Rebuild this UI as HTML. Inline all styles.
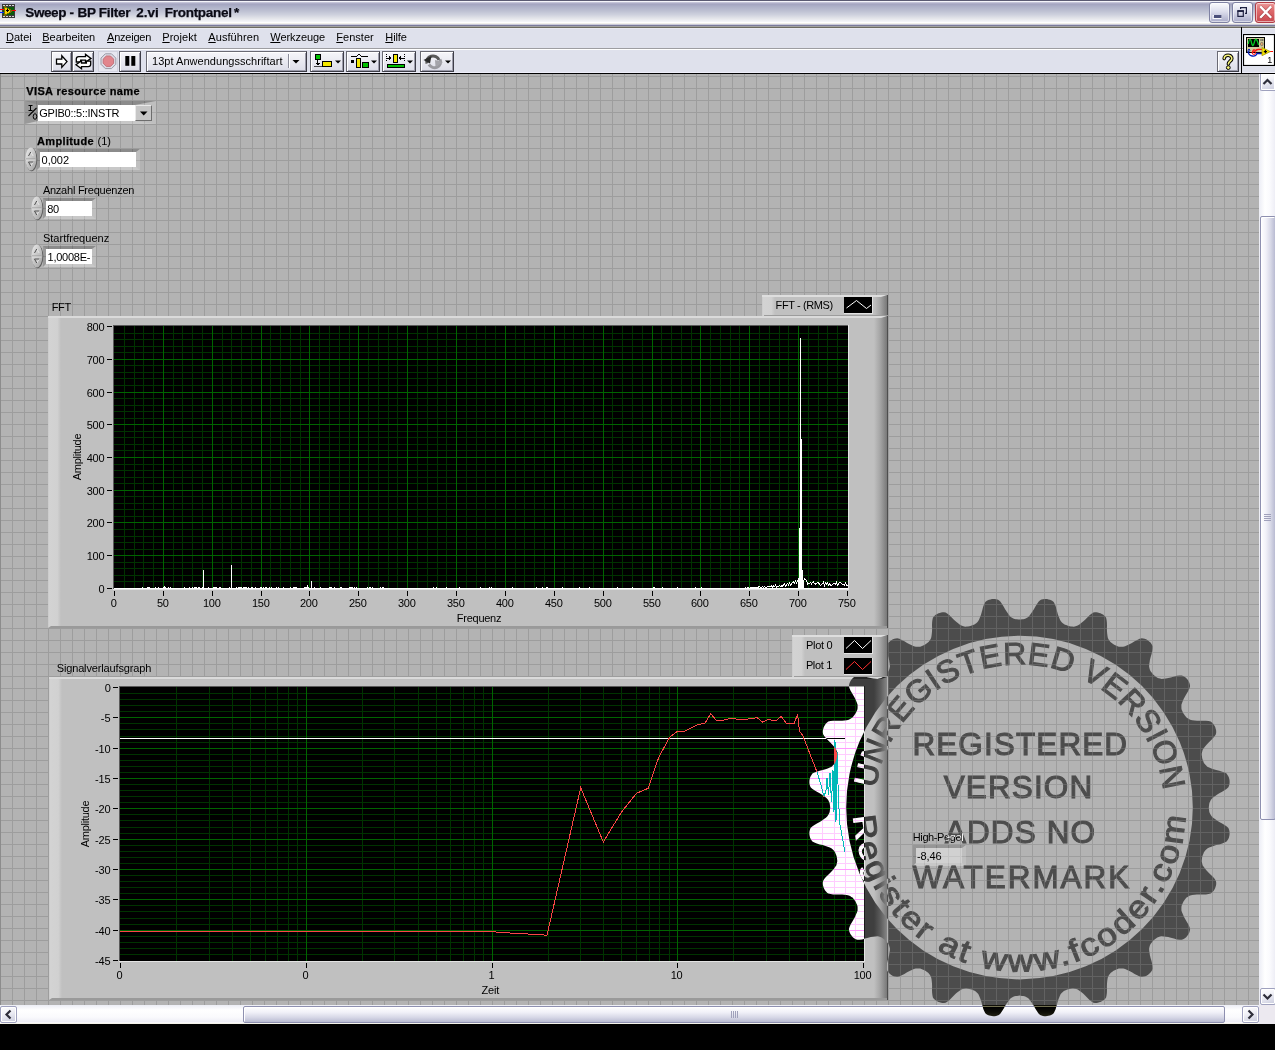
<!DOCTYPE html>
<html><head><meta charset="utf-8"><title>Sweep - BP Filter 2.vi Frontpanel *</title>
<style>
html,body{margin:0;padding:0;}
body{width:1275px;height:1050px;overflow:hidden;position:relative;background:#000;font-family:"Liberation Sans",sans-serif;}
.a{position:absolute;}
.t{position:absolute;white-space:nowrap;font-family:"Liberation Sans",sans-serif;}
#titlebar{left:0;top:0;width:1275px;height:28px;background:linear-gradient(to bottom,#5a5a72 0.5px,#f4f4fa 1.5px,#c4c4d8 2.5px,#aeaec8 3.5px,#a5a6c1 4.5px,#adb0c8 6.5px,#bcbfd1 10.5px,#cdd0dd 14.5px,#e4e5ea 18.5px,#f4f5f8 21.5px,#ffffff 22.5px,#f1efe9 23.5px,#c9c9d9 24.5px,#7b7b9b 25.5px,#a1a1a1 26.5px,#6e6c60 27.5px);}
#menubar{left:0;top:28px;width:1275px;height:21px;background:#dfe1ec;border-bottom:1px solid #9d9da1;border-top:1px solid #e8e9f3;box-sizing:border-box;}
#toolbar{left:0;top:49px;width:1275px;height:24px;background:#dfe1ec;border-top:1px solid #fff;border-bottom:1px solid #eeeefa;box-sizing:border-box;}
#tbline{left:0;top:73px;width:1275px;height:1px;background:#000;}
#panel{left:0;top:74px;width:1259px;height:931px;background-color:#b3b3b3;
 background-image:linear-gradient(to right,#9d9d9d 1px,transparent 1px),linear-gradient(to bottom,#9d9d9d 1px,transparent 1px);
 background-size:12px 12px,12px 12px;background-position:0px 0px,0px 2px;}
.tb{position:absolute;top:51px;height:21px;box-sizing:border-box;border:1px solid;border-color:#6a6a74 #3e3e48 #3e3e48 #6a6a74;background:linear-gradient(to bottom,#f6f6fa,#dcdde8);box-shadow:inset 1px 1px 0 #fff,inset -1px -1px 0 #9c9cab;}
.sbh{left:0;top:1005px;width:1259px;height:19px;background:linear-gradient(to bottom,#ecedf5 0,#ffffff 5px,#fafafd 12px,#eeeef6 17px,#ffffff 18px,#ece9d8 19px);}
.sbv{left:1259px;top:74px;width:16px;height:931px;background:linear-gradient(to right,#ecedf5 0,#ffffff 6px,#fafafd 11px,#eeeef6 16px);}
.sbtn{position:absolute;box-sizing:border-box;border:1px solid #9fa1be;border-radius:2px;background:linear-gradient(160deg,#ffffff 0%,#f4f4f9 35%,#c9cbdd 100%);box-shadow:inset 0 0 0 1px #fff;}
.field{position:absolute;background:#fff;}
</style></head><body>

<div id="titlebar" class="a"></div>
<svg class="a" style="left:0;top:3px" width="20" height="16" viewBox="0 0 20 16" shape-rendering="crispEdges">
<rect x="2" y="1" width="13" height="14" fill="#3b3b3b"/>
<rect x="3" y="4" width="11" height="8" fill="#0a5a0a"/>
<g fill="#d8d8d8"><rect x="3" y="2" width="2" height="1"/><rect x="6" y="2" width="2" height="1"/><rect x="9" y="2" width="2" height="1"/><rect x="12" y="2" width="2" height="1"/>
<rect x="3" y="13" width="2" height="1"/><rect x="6" y="13" width="2" height="1"/><rect x="9" y="13" width="2" height="1"/><rect x="12" y="13" width="2" height="1"/></g>
<rect x="0" y="6" width="5" height="1" fill="#ff0000"/><rect x="0" y="9" width="5" height="1" fill="#0030ff"/><rect x="11" y="7" width="5" height="1" fill="#ff0000"/>
<polygon points="4,3 4,13 12,8" fill="#f2d200" stroke="#7a6a00" stroke-width="1"/>
<rect x="6" y="7" width="3" height="1" fill="#000"/><rect x="7" y="6" width="1" height="3" fill="#000"/>
</svg>
<div class="t" style="left:25.30px;top:3.22px;font-size:13.5px;line-height:20px;color:#0a0a14;font-weight:bold;-webkit-text-stroke:0.25px #0a0a14;letter-spacing:-0.400px;">Sweep</div>
<div class="t" style="left:69.50px;top:3.22px;font-size:13.5px;line-height:20px;color:#0a0a14;font-weight:bold;-webkit-text-stroke:0.25px #0a0a14;">-</div>
<div class="t" style="left:77.60px;top:3.22px;font-size:13.5px;line-height:20px;color:#0a0a14;font-weight:bold;-webkit-text-stroke:0.25px #0a0a14;letter-spacing:-0.400px;">BP</div>
<div class="t" style="left:98.70px;top:3.22px;font-size:13.5px;line-height:20px;color:#0a0a14;font-weight:bold;-webkit-text-stroke:0.25px #0a0a14;letter-spacing:-0.218px;">Filter</div>
<div class="t" style="left:136.30px;top:3.22px;font-size:13.5px;line-height:20px;color:#0a0a14;font-weight:bold;-webkit-text-stroke:0.25px #0a0a14;letter-spacing:-0.054px;">2.vi</div>
<div class="t" style="left:164.80px;top:3.22px;font-size:13.5px;line-height:20px;color:#0a0a14;font-weight:bold;-webkit-text-stroke:0.25px #0a0a14;letter-spacing:-0.285px;">Frontpanel</div>
<div class="t" style="left:233.90px;top:3.22px;font-size:13.5px;line-height:20px;color:#0a0a14;font-weight:bold;-webkit-text-stroke:0.25px #0a0a14;">*</div>
<div class="a" style="left:1209px;top:2px;width:21px;height:21px;box-sizing:border-box;border:1px solid #7f82a3;border-radius:3px;background:linear-gradient(to bottom,#fbfbfd 0,#dddeed 45%,#a9abc9 100%);box-shadow:inset 0 0 0 1px rgba(255,255,255,.55);"></div>
<div class="a" style="left:1232px;top:2px;width:21px;height:21px;box-sizing:border-box;border:1px solid #7f82a3;border-radius:3px;background:linear-gradient(to bottom,#fbfbfd 0,#dddeed 45%,#a9abc9 100%);box-shadow:inset 0 0 0 1px rgba(255,255,255,.55);"></div>
<div class="a" style="left:1255px;top:2px;width:21px;height:21px;box-sizing:border-box;border:1px solid #b03a44;border-radius:3px;background:linear-gradient(to bottom,#ec9a9a 0,#de6a6c 40%,#c8484e 100%);box-shadow:inset 0 0 0 1px rgba(255,255,255,.55);"></div>
<svg class="a" style="left:1209px;top:2px" width="66" height="21" viewBox="0 0 66 21">
<rect x="5" y="13" width="8" height="3" fill="#4b4f7a" stroke="#fff" stroke-width="0" />
<rect x="4.5" y="12.5" width="8" height="3" fill="none" stroke="#fff" stroke-width="1" opacity=".9" transform="translate(-0.5,1)"/>
<rect x="5" y="13" width="7" height="3" fill="#4b4f7a"/>
<g fill="none" stroke="#1e2040" stroke-width="1.2"><path d="M31.6 7 V5.6 H37.4 V11.4 H36"/><rect x="28.9" y="9.2" width="5.4" height="5.2"/><path d="M28.3 9 H34.9" stroke-width="1.8"/></g>
<g stroke="#7a2a30" stroke-width="3.4" stroke-linecap="butt" opacity=".55"><path d="M51.2 4.4 L62.2 15.8 M62.2 4.4 L51.2 15.8"/></g><g stroke="#fff" stroke-width="2.3" stroke-linecap="butt"><path d="M51.2 4.4 L62.2 15.8 M62.2 4.4 L51.2 15.8"/></g>
</svg>
<div id="menubar" class="a"></div>
<div class="t" style="left:5.90px;top:26.59px;font-size:11px;line-height:20px;letter-spacing:0.044px;color:#000"><span style="text-decoration:underline;text-underline-offset:1px">D</span>atei</div>
<div class="t" style="left:42.30px;top:26.59px;font-size:11px;line-height:20px;letter-spacing:-0.041px;color:#000"><span style="text-decoration:underline;text-underline-offset:1px">B</span>earbeiten</div>
<div class="t" style="left:107.10px;top:26.59px;font-size:11px;line-height:20px;letter-spacing:-0.234px;color:#000"><span style="text-decoration:underline;text-underline-offset:1px">A</span>nzeigen</div>
<div class="t" style="left:162.30px;top:26.59px;font-size:11px;line-height:20px;letter-spacing:0.038px;color:#000"><span style="text-decoration:underline;text-underline-offset:1px">P</span>rojekt</div>
<div class="t" style="left:208.30px;top:26.59px;font-size:11px;line-height:20px;letter-spacing:0.073px;color:#000"><span style="text-decoration:underline;text-underline-offset:1px">A</span>usführen</div>
<div class="t" style="left:270.30px;top:26.59px;font-size:11px;line-height:20px;letter-spacing:-0.071px;color:#000"><span style="text-decoration:underline;text-underline-offset:1px">W</span>erkzeuge</div>
<div class="t" style="left:336.30px;top:26.59px;font-size:11px;line-height:20px;letter-spacing:0.029px;color:#000"><span style="text-decoration:underline;text-underline-offset:1px">F</span>enster</div>
<div class="t" style="left:385.30px;top:26.59px;font-size:11px;line-height:20px;letter-spacing:-0.102px;color:#000"><span style="text-decoration:underline;text-underline-offset:1px">H</span>ilfe</div>
<div id="toolbar" class="a"></div><div id="tbline" class="a"></div>
<div class="tb" style="left:51px;width:21px;"></div>
<div class="tb" style="left:72px;width:22px;"></div>
<div class="a" style="left:98px;top:51px;width:20px;height:21px;box-sizing:border-box;border:1px solid #d0d1dd;background:#e6e7f0;"></div>
<div class="tb" style="left:119px;width:22px;"></div>
<div class="tb" style="left:146px;width:161px;"></div>
<div class="tb" style="left:310px;width:34px;"></div>
<div class="tb" style="left:346px;width:34px;"></div>
<div class="tb" style="left:382px;width:34px;"></div>
<div class="tb" style="left:420px;width:34px;"></div>
<svg class="a" style="left:51px;top:51px" width="410" height="21" viewBox="0 0 410 21">
<!-- run arrow -->
<path d="M5.5 8.2 H10.8 V4.8 L16 10.6 L10.8 16.4 V13 H5.5 Z" fill="#fff" stroke="#000" stroke-width="1.3" stroke-linejoin="miter"/>
<!-- run continuously -->
<g fill="#fff" stroke="#000" stroke-width="1.3" stroke-linejoin="miter">
<path d="M25.3 11 V8 Q25.3 5.6 27.8 5.6 H34.5 V3.4 L40 7.4 L34.5 11.4 V9.2 H29.6 V11 Z"/>
<path d="M39.7 10.2 V13.2 Q39.7 15.6 37.2 15.6 H30.5 V17.8 L25 13.8 L30.5 9.8 V12 H35.4 V10.2 Z"/>
</g>
<!-- abort -->
<polygon points="64.8,13.3 60.5,17.6 54.3,17.6 50.0,13.3 50.0,7.1 54.3,2.8 60.5,2.8 64.8,7.1" fill="#dcdce5" stroke="#9a9aa6" stroke-width="1"/>
<polygon points="62.6,12.3 59.5,15.4 55.3,15.4 52.2,12.3 52.2,8.1 55.3,5.0 59.5,5.0 62.6,8.1" fill="#e2858c" stroke="#c4727a" stroke-width="1"/>
<!-- pause -->
<rect x="74.3" y="5" width="4" height="9.8" fill="#000"/><rect x="80.3" y="5" width="4" height="9.8" fill="#000"/>
<!-- font dropdown arrow + sep -->
<rect x="237" y="3" width="1" height="14" fill="#8b8c99"/><rect x="238" y="3" width="1" height="14" fill="#fff"/>
<polygon points="241.5,9 248.5,9 245,12.5" fill="#000"/>
<!-- align -->
<g shape-rendering="crispEdges">
<rect x="264" y="3" width="5" height="5" fill="#00c000" stroke="#000" stroke-width="1"/>
<rect x="266" y="9" width="1" height="5" fill="#000"/><polygon points="263.5,11.5 269.5,11.5 266.5,14.5" fill="#000"/>
<rect x="263" y="15" width="13" height="1" fill="#000" opacity=".7"/>
<rect x="271" y="10" width="9" height="5" fill="#f4e800" stroke="#000" stroke-width="1"/>
</g><polygon points="284,9.5 290,9.5 287,12.5" fill="#000"/>
<!-- distribute -->
<g shape-rendering="crispEdges">
<path d="M300 6 V5 H306 L308 3 L310 5 H316 V6" fill="none" stroke="#000" stroke-width="1"/>
<rect x="300" y="9" width="3" height="3" fill="#000"/>
<rect x="305" y="7" width="4" height="9" fill="#f4e800" stroke="#000" stroke-width="1"/>
<rect x="311" y="11" width="6" height="5" fill="#00c000" stroke="#000" stroke-width="1"/>
</g><polygon points="320,9.5 326,9.5 323,12.5" fill="#000"/>
<!-- resize -->
<g shape-rendering="crispEdges">
<rect x="342" y="3" width="4" height="8" fill="#f4e800" stroke="#000" stroke-width="1"/>
<path d="M335 7 H340 M348 7 H353" stroke="#000" stroke-width="1"/><polygon points="338,4.5 341,7 338,9.5" fill="#000"/><polygon points="350,4.5 347,7 350,9.5" fill="#000"/>
<path d="M335 3 V11 M353 3 V11" stroke="#000" stroke-width="1" stroke-dasharray="1 1"/>
<rect x="336" y="13" width="17" height="3" fill="#00c000" stroke="#000" stroke-width="1"/>
</g><polygon points="356,9.5 362,9.5 359,12.5" fill="#000"/>
<!-- reorder -->
<g fill="none" stroke-linecap="butt">
<path d="M376 12.5 A6 5.5 0 1 1 388 9" stroke="#5a5a5a" stroke-width="3"/>
<path d="M389 8.5 A6 5.5 0 0 1 378 13.5" stroke="#9a9aa0" stroke-width="3"/>
</g><polygon points="372.5,9 380.5,5 379,12.5" fill="#2a2a2a"/><polygon points="392,11 384.5,16 384,9" fill="#a4a4aa"/>
<polygon points="394,9.5 400,9.5 397,12.5" fill="#000"/>
</svg>
<div class="t" style="left:152.00px;top:50.69px;font-size:11px;line-height:20px;color:#000;letter-spacing:0.034px;">13pt Anwendungsschriftart</div>
<div class="tb" style="left:1217px;width:22px;"></div>
<svg class="a" style="left:1217px;top:51px" width="22" height="21" viewBox="0 0 22 21">
<path d="M7.2 7.6 C7.2 3.2 14.8 3.2 14.8 7.4 C14.8 10 11.4 10.2 11.4 13" fill="none" stroke="#000" stroke-width="3.6" stroke-linecap="round"/>
<path d="M7.2 7.6 C7.2 3.2 14.8 3.2 14.8 7.4 C14.8 10 11.4 10.2 11.4 13" fill="none" stroke="#f5f27a" stroke-width="1.6" stroke-linecap="round"/>
<circle cx="11.3" cy="16.6" r="1.9" fill="#f5f27a" stroke="#000" stroke-width="1"/>
</svg>
<div class="a" style="left:1241px;top:27px;width:1px;height:46px;background:#000"></div>
<svg class="a" style="left:1243px;top:34px" width="32" height="32" viewBox="0 0 32 32">
<rect x="0.5" y="0.5" width="31" height="31" fill="#fff" stroke="#000" stroke-width="1.2"/>
<rect x="3.5" y="3.5" width="18" height="15" fill="#cfcb9c" stroke="#000" stroke-width="1"/>
<rect x="5" y="5" width="11" height="8" fill="#000"/>
<path d="M5.3 10 C6.3 4 7.6 4 8.6 9 C9.4 12.5 10.4 12.5 11.4 8 C12.4 4 13.6 4 15.6 11" fill="none" stroke="#00c820" stroke-width="1.3"/>
<rect x="17.5" y="5" width="1" height="2" fill="#555"/><rect x="19.3" y="5" width="1" height="2" fill="#555"/>
<ellipse cx="18.8" cy="10" rx="1.3" ry="1.7" fill="#f0b070" stroke="#555" stroke-width=".6"/>
<path d="M5 17 C5.5 23 12.5 23.5 14 19.5 H19" fill="none" stroke="#0018b8" stroke-width="1.3"/>
<path d="M6 15.5 V18 M4.8 16.5 L6 15 L7.2 16.5" fill="none" stroke="#0018b8" stroke-width="1"/>
<path d="M10 19.5 C9 15.5 12 14.5 12.5 17.5 C13 14.5 15 15.5 19 15.5 M27 17.5 H30" fill="none" stroke="#ff1010" stroke-width="1.2"/>
<circle cx="10.8" cy="18.8" r="1.7" fill="none" stroke="#ff1010" stroke-width="1"/>
<polygon points="19,13.5 19,21.7 27.3,17.6" fill="#f4e400" stroke="#a89800" stroke-width=".8"/>
<path d="M20.8 17.6 H24 M22.4 16 V19.2" stroke="#000" stroke-width="1.1"/>
</svg>
<div class="t" style="left:1267.30px;top:49.88px;font-size:9px;line-height:20px;color:#000;">1</div>
<div id="panel" class="a"></div>
<div class="a" style="left:0;top:74px;width:1px;height:931px;background:#8c8c8c"></div>
<div class="t" style="left:26.20px;top:80.89px;font-size:11px;line-height:20px;color:#000;font-weight:bold;-webkit-text-stroke:0.25px #000;letter-spacing:0.400px;">VISA resource name</div>
<svg class="a" style="left:25px;top:101px" width="131" height="23" viewBox="0 0 131 23"><polygon points="0,0 131,0 110,4 13,4" fill="#000" fill-opacity="0.22"/><polygon points="0,0 13,4 13,20 0,23" fill="#000" fill-opacity="0.14"/><polygon points="0,23 13,20 110,20 131,23" fill="#fff" fill-opacity=".28"/><polygon points="131,0 131,23 110,20 110,4" fill="#fff" fill-opacity=".17"/><rect x="13" y="4" width="97" height="16" fill="#fff" fill-opacity="1.0"/></svg>
<svg class="a" style="left:26px;top:103px" width="13" height="19" viewBox="0 0 13 19">
<path d="M2.5 2.5 H6.5 M4.5 2.5 V7.5 M2.5 7.5 H6.5" stroke="#000" stroke-width="1" fill="none"/>
<path d="M2.5 13 L10.5 5" stroke="#000" stroke-width="1.1"/>
<ellipse cx="9" cy="13.5" rx="1.8" ry="2.8" fill="none" stroke="#000" stroke-width="1"/></svg>
<div class="t" style="left:39.30px;top:103.49px;font-size:11px;line-height:20px;color:#000;letter-spacing:-0.250px;">GPIB0::5::INSTR</div>
<div class="a" style="left:135px;top:105px;width:17px;height:16px;box-sizing:border-box;background:#c6c6c6;border:1px solid;border-color:#e9e9e9 #6d6d6d #6d6d6d #e9e9e9"></div>
<svg class="a" style="left:135px;top:105px" width="17" height="16"><polygon points="5,6.5 12.5,6.5 8.7,10.5" fill="#000"/></svg>
<div class="t" style="left:37.00px;top:130.69px;font-size:11px;line-height:20px;color:#000;font-weight:bold;-webkit-text-stroke:0.25px #000;letter-spacing:0.358px;">Amplitude</div>
<div class="t" style="left:97.50px;top:130.69px;font-size:11px;line-height:20px;color:#000;letter-spacing:0.019px;">(1)</div>
<svg class="a" style="left:37px;top:149px" width="103" height="21" viewBox="0 0 103 21"><polygon points="0,0 103,0 99,3 3,3" fill="#000" fill-opacity="0.22"/><polygon points="0,0 3,3 3,18 0,21" fill="#000" fill-opacity="0.14"/><polygon points="0,21 3,18 99,18 103,21" fill="#fff" fill-opacity=".28"/><polygon points="103,0 103,21 99,18 99,3" fill="#fff" fill-opacity=".17"/><rect x="3" y="3" width="96" height="15" fill="#fff" fill-opacity="1.0"/></svg>
<svg class="a" style="left:25px;top:147px" width="13" height="25" viewBox="0 0 13 25"><defs><linearGradient id="sg25147" x1="0" x2="1" y1="0" y2="1"><stop offset="0" stop-color="#ececec"/><stop offset=".4" stop-color="#cdcdcd"/><stop offset="1" stop-color="#a2a2a2"/></linearGradient></defs><ellipse cx="6.6" cy="12.6" rx="5.7" ry="11.7" fill="#5e5e5e"/><ellipse cx="5.9" cy="11.9" rx="5.5" ry="11.5" fill="url(#sg25147)"/><rect x="1" y="11.5" width="9.5" height="1" fill="#9a9a9a"/><rect x="1" y="12.5" width="9.5" height="1" fill="#dedede"/><path d="M3.5 9.0 L5.7 5.0 L8.2 9.0" fill="none" stroke="#e8e8e8" stroke-width="1"/><path d="M3.5 9.0 L5.7 5.0" fill="none" stroke="#4a4a4a" stroke-width="1"/><path d="M3.5 15.0 L5.7 19.0 L8.2 15.0 Z" fill="none" stroke="#e8e8e8" stroke-width="1"/><path d="M8.2 15.0 L3.5 15.0 L5.7 19.0" fill="none" stroke="#4a4a4a" stroke-width="1"/></svg>
<div class="t" style="left:41.60px;top:149.69px;font-size:11px;line-height:20px;color:#000;letter-spacing:-0.006px;">0,002</div>
<div class="t" style="left:42.90px;top:179.79px;font-size:11px;line-height:20px;color:#000;letter-spacing:-0.241px;">Anzahl Frequenzen</div>
<svg class="a" style="left:43px;top:198px" width="53" height="21" viewBox="0 0 53 21"><polygon points="0,0 53,0 49,3 3,3" fill="#000" fill-opacity="0.22"/><polygon points="0,0 3,3 3,18 0,21" fill="#000" fill-opacity="0.14"/><polygon points="0,21 3,18 49,18 53,21" fill="#fff" fill-opacity=".28"/><polygon points="53,0 53,21 49,18 49,3" fill="#fff" fill-opacity=".17"/><rect x="3" y="3" width="46" height="15" fill="#fff" fill-opacity="1.0"/></svg>
<svg class="a" style="left:31px;top:196px" width="13" height="25" viewBox="0 0 13 25"><defs><linearGradient id="sg31196" x1="0" x2="1" y1="0" y2="1"><stop offset="0" stop-color="#ececec"/><stop offset=".4" stop-color="#cdcdcd"/><stop offset="1" stop-color="#a2a2a2"/></linearGradient></defs><ellipse cx="6.6" cy="12.6" rx="5.7" ry="11.7" fill="#5e5e5e"/><ellipse cx="5.9" cy="11.9" rx="5.5" ry="11.5" fill="url(#sg31196)"/><rect x="1" y="11.5" width="9.5" height="1" fill="#9a9a9a"/><rect x="1" y="12.5" width="9.5" height="1" fill="#dedede"/><path d="M3.5 9.0 L5.7 5.0 L8.2 9.0" fill="none" stroke="#e8e8e8" stroke-width="1"/><path d="M3.5 9.0 L5.7 5.0" fill="none" stroke="#4a4a4a" stroke-width="1"/><path d="M3.5 15.0 L5.7 19.0 L8.2 15.0 Z" fill="none" stroke="#e8e8e8" stroke-width="1"/><path d="M8.2 15.0 L3.5 15.0 L5.7 19.0" fill="none" stroke="#4a4a4a" stroke-width="1"/></svg>
<div class="t" style="left:47.30px;top:198.69px;font-size:11px;line-height:20px;color:#000;letter-spacing:-0.368px;">80</div>
<div class="t" style="left:42.90px;top:227.99px;font-size:11px;line-height:20px;color:#000;letter-spacing:0.020px;">Startfrequenz</div>
<svg class="a" style="left:43px;top:246px" width="53" height="21" viewBox="0 0 53 21"><polygon points="0,0 53,0 49,3 3,3" fill="#000" fill-opacity="0.22"/><polygon points="0,0 3,3 3,18 0,21" fill="#000" fill-opacity="0.14"/><polygon points="0,21 3,18 49,18 53,21" fill="#fff" fill-opacity=".28"/><polygon points="53,0 53,21 49,18 49,3" fill="#fff" fill-opacity=".17"/><rect x="3" y="3" width="46" height="15" fill="#fff" fill-opacity="1.0"/></svg>
<svg class="a" style="left:31px;top:244px" width="13" height="25" viewBox="0 0 13 25"><defs><linearGradient id="sg31244" x1="0" x2="1" y1="0" y2="1"><stop offset="0" stop-color="#ececec"/><stop offset=".4" stop-color="#cdcdcd"/><stop offset="1" stop-color="#a2a2a2"/></linearGradient></defs><ellipse cx="6.6" cy="12.6" rx="5.7" ry="11.7" fill="#5e5e5e"/><ellipse cx="5.9" cy="11.9" rx="5.5" ry="11.5" fill="url(#sg31244)"/><rect x="1" y="11.5" width="9.5" height="1" fill="#9a9a9a"/><rect x="1" y="12.5" width="9.5" height="1" fill="#dedede"/><path d="M3.5 9.0 L5.7 5.0 L8.2 9.0" fill="none" stroke="#e8e8e8" stroke-width="1"/><path d="M3.5 9.0 L5.7 5.0" fill="none" stroke="#4a4a4a" stroke-width="1"/><path d="M3.5 15.0 L5.7 19.0 L8.2 15.0 Z" fill="none" stroke="#e8e8e8" stroke-width="1"/><path d="M8.2 15.0 L3.5 15.0 L5.7 19.0" fill="none" stroke="#4a4a4a" stroke-width="1"/></svg>
<div class="t" style="left:47.60px;top:246.79px;font-size:11px;line-height:20px;color:#000;letter-spacing:-0.268px;">1,0008E-</div>
<div class="t" style="left:912.80px;top:826.69px;font-size:11px;line-height:20px;color:#000;letter-spacing:-0.400px;">High-Pegel</div>
<svg class="a" style="left:913px;top:845px" width="53" height="21" viewBox="0 0 53 21"><polygon points="0,0 53,0 49,3 3,3" fill="#000" fill-opacity="0.16"/><polygon points="0,0 3,3 3,18 0,21" fill="#000" fill-opacity="0.16"/><polygon points="0,21 3,18 49,18 53,21" fill="#fff" fill-opacity=".28"/><polygon points="53,0 53,21 49,18 49,3" fill="#fff" fill-opacity=".17"/><rect x="3" y="3" width="46" height="15" fill="#fff" fill-opacity="0.4"/></svg>
<div class="t" style="left:917.00px;top:845.79px;font-size:11px;line-height:20px;color:#000;letter-spacing:-0.115px;">-8,46</div>
<div class="t" style="left:51.80px;top:296.89px;font-size:11px;line-height:20px;color:#000;letter-spacing:-0.400px;">FFT</div>
<svg class="a" style="left:762px;top:295px" width="126" height="21" viewBox="762 295 126 21"><defs><linearGradient id="lla" x1="0" x2="1" y1="0" y2="0"><stop offset="0" stop-color="#c9c9c9"/><stop offset=".1" stop-color="#d3d3d3"/><stop offset=".72" stop-color="#d1d1d1"/><stop offset="1" stop-color="#c0c0c0"/></linearGradient><linearGradient id="lra" x1="0" x2="1" y1="0" y2="0"><stop offset="0" stop-color="#c0c0c0"/><stop offset=".45" stop-color="#a4a4a4"/><stop offset="1" stop-color="#727272"/></linearGradient></defs><rect x="762" y="295" width="126" height="21" fill="#c0c0c0"/><rect x="762" y="295" width="13" height="21" fill="url(#lla)"/><rect x="874" y="295" width="14" height="21" fill="url(#lra)"/><polygon points="762,295 887,295 881,297 762,297" fill="#dedede"/><rect x="887" y="295" width="1" height="21" fill="#4e4e4e"/><rect x="764" y="315" width="124" height="1" fill="#9c9c9c"/><rect x="844" y="297" width="29" height="17" fill="#e2e2e2"/><rect x="844" y="297" width="28" height="16" fill="#000"/><polyline points="846.5,308 856.5,300.5 866.5,308.5 871,305" fill="none" stroke="#fff" stroke-width="1"/><g font-family="Liberation Sans, sans-serif" fill="#000"><text x="775.6" y="309" text-anchor="start" font-size="11" letter-spacing="-0.400">FFT - (RMS)</text></g></svg>
<svg class="a" style="left:48px;top:316px" width="840" height="312" viewBox="48 316 840 312"><defs><linearGradient id="lf" x1="0" x2="1" y1="0" y2="0"><stop offset="0" stop-color="#c9c9c9"/><stop offset=".1" stop-color="#d3d3d3"/><stop offset=".72" stop-color="#d1d1d1"/><stop offset="1" stop-color="#c0c0c0"/></linearGradient><linearGradient id="rf" x1="0" x2="1" y1="0" y2="0"><stop offset="0" stop-color="#c0c0c0"/><stop offset=".45" stop-color="#a4a4a4"/><stop offset="1" stop-color="#727272"/></linearGradient></defs><rect x="48" y="316" width="840" height="312" fill="#c0c0c0"/><rect x="48" y="316" width="13" height="312" fill="url(#lf)"/><rect x="874" y="316" width="14" height="312" fill="url(#rf)"/><polygon points="48,316 887,316 881,318 48,318" fill="#dadada"/><polygon points="48,628 51,626 888,626 888,628" fill="#9a9a9a"/><rect x="887" y="316" width="1" height="312" fill="#4e4e4e"/><rect x="113" y="325" width="736" height="265" fill="#e4e4e4"/><rect x="113" y="325" width="735" height="264" fill="#5a5a5a"/><rect x="114" y="326" width="734" height="263" fill="#000"/><g shape-rendering="crispEdges"><rect x="124" y="326" width="1" height="263" fill="#003300"/><rect x="134" y="326" width="1" height="263" fill="#003300"/><rect x="143" y="326" width="1" height="263" fill="#003300"/><rect x="153" y="326" width="1" height="263" fill="#003300"/><rect x="173" y="326" width="1" height="263" fill="#003300"/><rect x="182" y="326" width="1" height="263" fill="#003300"/><rect x="192" y="326" width="1" height="263" fill="#003300"/><rect x="202" y="326" width="1" height="263" fill="#003300"/><rect x="222" y="326" width="1" height="263" fill="#003300"/><rect x="231" y="326" width="1" height="263" fill="#003300"/><rect x="241" y="326" width="1" height="263" fill="#003300"/><rect x="251" y="326" width="1" height="263" fill="#003300"/><rect x="270" y="326" width="1" height="263" fill="#003300"/><rect x="280" y="326" width="1" height="263" fill="#003300"/><rect x="290" y="326" width="1" height="263" fill="#003300"/><rect x="300" y="326" width="1" height="263" fill="#003300"/><rect x="319" y="326" width="1" height="263" fill="#003300"/><rect x="329" y="326" width="1" height="263" fill="#003300"/><rect x="339" y="326" width="1" height="263" fill="#003300"/><rect x="349" y="326" width="1" height="263" fill="#003300"/><rect x="368" y="326" width="1" height="263" fill="#003300"/><rect x="378" y="326" width="1" height="263" fill="#003300"/><rect x="388" y="326" width="1" height="263" fill="#003300"/><rect x="397" y="326" width="1" height="263" fill="#003300"/><rect x="417" y="326" width="1" height="263" fill="#003300"/><rect x="427" y="326" width="1" height="263" fill="#003300"/><rect x="437" y="326" width="1" height="263" fill="#003300"/><rect x="446" y="326" width="1" height="263" fill="#003300"/><rect x="466" y="326" width="1" height="263" fill="#003300"/><rect x="476" y="326" width="1" height="263" fill="#003300"/><rect x="485" y="326" width="1" height="263" fill="#003300"/><rect x="495" y="326" width="1" height="263" fill="#003300"/><rect x="515" y="326" width="1" height="263" fill="#003300"/><rect x="524" y="326" width="1" height="263" fill="#003300"/><rect x="534" y="326" width="1" height="263" fill="#003300"/><rect x="544" y="326" width="1" height="263" fill="#003300"/><rect x="564" y="326" width="1" height="263" fill="#003300"/><rect x="573" y="326" width="1" height="263" fill="#003300"/><rect x="583" y="326" width="1" height="263" fill="#003300"/><rect x="593" y="326" width="1" height="263" fill="#003300"/><rect x="612" y="326" width="1" height="263" fill="#003300"/><rect x="622" y="326" width="1" height="263" fill="#003300"/><rect x="632" y="326" width="1" height="263" fill="#003300"/><rect x="642" y="326" width="1" height="263" fill="#003300"/><rect x="661" y="326" width="1" height="263" fill="#003300"/><rect x="671" y="326" width="1" height="263" fill="#003300"/><rect x="681" y="326" width="1" height="263" fill="#003300"/><rect x="691" y="326" width="1" height="263" fill="#003300"/><rect x="710" y="326" width="1" height="263" fill="#003300"/><rect x="720" y="326" width="1" height="263" fill="#003300"/><rect x="730" y="326" width="1" height="263" fill="#003300"/><rect x="739" y="326" width="1" height="263" fill="#003300"/><rect x="759" y="326" width="1" height="263" fill="#003300"/><rect x="769" y="326" width="1" height="263" fill="#003300"/><rect x="779" y="326" width="1" height="263" fill="#003300"/><rect x="788" y="326" width="1" height="263" fill="#003300"/><rect x="808" y="326" width="1" height="263" fill="#003300"/><rect x="818" y="326" width="1" height="263" fill="#003300"/><rect x="827" y="326" width="1" height="263" fill="#003300"/><rect x="837" y="326" width="1" height="263" fill="#003300"/><rect x="114" y="581" width="734" height="1" fill="#003300"/><rect x="114" y="575" width="734" height="1" fill="#003300"/><rect x="114" y="568" width="734" height="1" fill="#003300"/><rect x="114" y="562" width="734" height="1" fill="#003300"/><rect x="114" y="549" width="734" height="1" fill="#003300"/><rect x="114" y="542" width="734" height="1" fill="#003300"/><rect x="114" y="536" width="734" height="1" fill="#003300"/><rect x="114" y="529" width="734" height="1" fill="#003300"/><rect x="114" y="516" width="734" height="1" fill="#003300"/><rect x="114" y="509" width="734" height="1" fill="#003300"/><rect x="114" y="503" width="734" height="1" fill="#003300"/><rect x="114" y="496" width="734" height="1" fill="#003300"/><rect x="114" y="483" width="734" height="1" fill="#003300"/><rect x="114" y="477" width="734" height="1" fill="#003300"/><rect x="114" y="470" width="734" height="1" fill="#003300"/><rect x="114" y="464" width="734" height="1" fill="#003300"/><rect x="114" y="450" width="734" height="1" fill="#003300"/><rect x="114" y="444" width="734" height="1" fill="#003300"/><rect x="114" y="437" width="734" height="1" fill="#003300"/><rect x="114" y="431" width="734" height="1" fill="#003300"/><rect x="114" y="418" width="734" height="1" fill="#003300"/><rect x="114" y="411" width="734" height="1" fill="#003300"/><rect x="114" y="405" width="734" height="1" fill="#003300"/><rect x="114" y="398" width="734" height="1" fill="#003300"/><rect x="114" y="385" width="734" height="1" fill="#003300"/><rect x="114" y="378" width="734" height="1" fill="#003300"/><rect x="114" y="372" width="734" height="1" fill="#003300"/><rect x="114" y="365" width="734" height="1" fill="#003300"/><rect x="114" y="352" width="734" height="1" fill="#003300"/><rect x="114" y="346" width="734" height="1" fill="#003300"/><rect x="114" y="339" width="734" height="1" fill="#003300"/><rect x="114" y="333" width="734" height="1" fill="#003300"/><rect x="163" y="326" width="1" height="263" fill="#006400"/><rect x="212" y="326" width="1" height="263" fill="#006400"/><rect x="261" y="326" width="1" height="263" fill="#006400"/><rect x="309" y="326" width="1" height="263" fill="#006400"/><rect x="358" y="326" width="1" height="263" fill="#006400"/><rect x="407" y="326" width="1" height="263" fill="#006400"/><rect x="456" y="326" width="1" height="263" fill="#006400"/><rect x="505" y="326" width="1" height="263" fill="#006400"/><rect x="554" y="326" width="1" height="263" fill="#006400"/><rect x="603" y="326" width="1" height="263" fill="#006400"/><rect x="652" y="326" width="1" height="263" fill="#006400"/><rect x="700" y="326" width="1" height="263" fill="#006400"/><rect x="749" y="326" width="1" height="263" fill="#006400"/><rect x="798" y="326" width="1" height="263" fill="#006400"/><rect x="114" y="555" width="734" height="1" fill="#006400"/><rect x="114" y="522" width="734" height="1" fill="#006400"/><rect x="114" y="490" width="734" height="1" fill="#006400"/><rect x="114" y="457" width="734" height="1" fill="#006400"/><rect x="114" y="424" width="734" height="1" fill="#006400"/><rect x="114" y="392" width="734" height="1" fill="#006400"/><rect x="114" y="359" width="734" height="1" fill="#006400"/><rect x="107" y="588" width="5" height="1" fill="#000"/><rect x="107" y="555" width="5" height="1" fill="#000"/><rect x="107" y="522" width="5" height="1" fill="#000"/><rect x="107" y="490" width="5" height="1" fill="#000"/><rect x="107" y="457" width="5" height="1" fill="#000"/><rect x="107" y="424" width="5" height="1" fill="#000"/><rect x="107" y="392" width="5" height="1" fill="#000"/><rect x="107" y="359" width="5" height="1" fill="#000"/><rect x="107" y="326" width="5" height="1" fill="#000"/><rect x="114" y="591" width="1" height="5" fill="#000"/><rect x="163" y="591" width="1" height="5" fill="#000"/><rect x="212" y="591" width="1" height="5" fill="#000"/><rect x="261" y="591" width="1" height="5" fill="#000"/><rect x="309" y="591" width="1" height="5" fill="#000"/><rect x="358" y="591" width="1" height="5" fill="#000"/><rect x="407" y="591" width="1" height="5" fill="#000"/><rect x="456" y="591" width="1" height="5" fill="#000"/><rect x="505" y="591" width="1" height="5" fill="#000"/><rect x="554" y="591" width="1" height="5" fill="#000"/><rect x="603" y="591" width="1" height="5" fill="#000"/><rect x="652" y="591" width="1" height="5" fill="#000"/><rect x="700" y="591" width="1" height="5" fill="#000"/><rect x="749" y="591" width="1" height="5" fill="#000"/><rect x="798" y="591" width="1" height="5" fill="#000"/><rect x="847" y="591" width="1" height="5" fill="#000"/></g><polyline shape-rendering="crispEdges" fill="none" stroke="#fff" stroke-width="1" points="114.50,588.5 115.50,588.5 116.50,588.5 117.50,588.5 118.50,588.5 119.50,588.5 120.50,588.5 121.50,588.5 122.50,588.5 123.50,588.5 124.50,588.5 125.50,588.5 126.50,588.5 127.50,588.5 128.50,588.5 129.50,588.5 130.50,588.5 131.50,588.5 132.50,588.5 133.50,588.5 134.50,588.5 135.50,588.5 136.50,588.5 137.50,588.5 138.50,588.5 139.50,588.5 140.50,588.5 141.50,588.5 142.50,587.5 143.50,588.5 144.50,588.5 145.50,588.5 146.50,588.5 147.50,587.5 148.50,587.5 149.50,587.5 150.50,588.5 151.50,588.5 152.50,588.5 153.50,588.5 154.50,588.5 155.50,587.5 156.50,588.5 157.50,588.5 158.50,587.5 159.50,588.5 160.50,588.5 161.50,588.5 162.50,588.5 163.50,587.5 164.05,588.5 164.50,585.9 164.95,588.5 165.50,587.5 166.50,588.5 167.50,588.5 168.50,587.5 169.50,588.5 170.50,587.5 171.50,588.5 172.50,588.5 173.50,588.5 174.50,588.5 175.50,588.5 176.50,588.5 177.50,588.5 178.50,588.5 179.50,588.5 180.50,588.5 181.50,588.5 182.50,588.5 183.50,588.5 184.50,587.5 185.50,588.5 186.50,588.5 187.50,588.5 188.50,588.5 189.50,587.5 190.50,588.5 191.50,588.5 192.50,587.5 193.50,588.5 194.50,587.5 195.50,587.5 196.50,587.5 197.50,588.5 198.50,587.5 199.50,587.5 200.50,588.5 201.50,588.5 202.50,587.5 203.05,588.5 203.50,570.2 203.95,588.5 204.50,588.5 205.50,588.5 206.50,588.5 207.50,588.5 208.50,587.5 209.50,588.5 210.50,588.5 211.50,588.5 212.50,588.5 213.50,587.5 214.50,587.5 215.50,587.5 216.50,587.5 217.50,588.5 218.50,588.5 219.50,587.5 220.50,587.5 221.50,588.5 222.50,588.5 223.50,588.5 224.50,588.5 225.50,588.5 226.50,588.5 227.50,588.5 228.50,588.5 229.50,587.5 230.50,588.5 231.05,588.5 231.50,565.2 231.95,588.5 232.50,588.5 233.50,588.5 234.50,588.5 235.50,588.5 236.50,587.5 237.50,588.5 238.50,587.5 239.50,587.5 240.50,587.5 241.50,587.5 242.50,588.5 243.50,587.5 244.50,587.5 245.50,587.5 246.50,587.5 247.50,588.5 248.50,587.5 249.50,588.5 250.50,588.5 251.50,587.5 252.50,587.5 253.50,588.5 254.50,588.5 255.50,587.5 256.50,588.5 257.50,588.5 258.50,588.5 259.50,588.5 260.50,587.5 261.50,587.5 262.50,588.5 263.50,587.5 264.50,588.5 265.50,587.5 266.50,587.5 267.50,588.5 268.50,588.5 269.50,587.5 270.50,588.5 271.50,587.5 272.50,588.5 273.50,588.5 274.50,588.5 275.50,588.5 276.50,587.5 277.50,588.5 278.50,587.5 279.50,588.5 280.50,588.5 281.50,588.5 282.50,588.5 283.50,587.5 284.50,588.5 285.50,588.5 286.50,588.5 287.50,588.5 288.50,588.5 289.50,588.5 290.50,587.5 291.50,588.5 292.50,588.5 293.50,587.5 294.50,587.5 295.50,587.5 296.50,587.5 297.50,588.5 298.50,588.5 299.50,588.5 300.50,588.5 301.50,588.5 302.50,588.5 303.50,588.5 304.50,587.5 305.50,587.5 306.50,587.5 307.05,587.5 307.50,584.6 307.95,587.5 308.50,588.5 309.50,588.5 310.50,588.5 311.05,588.5 311.50,581.3 311.95,588.5 312.50,588.5 313.50,588.5 314.50,587.5 315.50,588.5 316.50,588.5 317.50,588.5 318.50,588.5 319.50,588.5 320.50,587.5 321.50,588.5 322.50,588.5 323.50,588.5 324.50,588.5 325.50,588.5 326.50,588.5 327.50,588.5 328.50,588.5 329.50,587.5 330.50,587.5 331.50,587.5 332.50,588.5 333.50,588.5 334.50,587.5 335.50,588.5 336.50,588.5 337.50,588.5 338.50,588.5 339.50,588.5 340.50,587.5 341.50,587.5 342.50,588.5 343.50,588.5 344.50,588.5 345.50,588.5 346.50,588.5 347.50,588.5 348.50,588.5 349.50,587.5 350.50,587.5 351.50,587.5 352.50,587.5 353.50,588.5 354.50,587.5 355.50,588.5 356.50,587.5 357.50,588.5 358.50,588.5 359.50,588.5 360.50,588.5 361.50,588.5 362.50,588.5 363.50,588.5 364.50,588.5 365.50,588.5 366.50,588.5 367.50,587.5 368.50,588.5 369.50,587.5 370.50,587.5 371.50,588.5 372.50,587.5 373.50,588.5 374.50,588.5 375.50,588.5 376.50,588.5 377.50,588.5 378.50,588.5 379.50,588.5 380.50,587.5 381.50,588.5 382.50,587.5 383.50,587.5 384.50,588.5 385.50,588.5 386.50,588.5 387.50,588.5 388.50,588.5 389.50,588.5 390.50,588.5 391.50,588.5 392.50,588.5 393.50,588.5 394.50,588.5 395.50,588.5 396.50,588.5 397.50,588.5 398.50,588.5 399.50,588.5 400.50,588.5 401.50,588.5 402.50,588.5 403.50,588.5 404.50,588.5 405.50,588.5 406.50,588.5 407.50,588.5 408.50,588.5 409.50,588.5 410.50,588.5 411.50,588.5 412.50,588.5 413.50,588.5 414.50,588.5 415.50,588.5 416.50,588.5 417.50,588.5 418.50,588.5 419.50,588.5 420.50,588.5 421.50,588.5 422.50,588.5 423.50,588.5 424.50,588.5 425.50,588.5 426.50,588.5 427.50,588.5 428.50,588.5 429.50,588.5 430.50,588.5 431.50,588.5 432.50,588.5 433.50,587.5 434.50,588.5 435.50,588.5 436.50,587.5 437.50,588.5 438.50,588.5 439.50,588.5 440.50,588.5 441.50,588.5 442.50,588.5 443.50,588.5 444.50,588.5 445.50,588.5 446.50,587.5 447.50,588.5 448.50,588.5 449.50,588.5 450.50,588.5 451.50,588.5 452.50,588.5 453.50,588.5 454.50,588.5 455.50,588.5 456.50,588.5 457.50,588.5 458.50,588.5 459.50,587.5 460.50,588.5 461.50,588.5 462.50,588.5 463.50,588.5 464.50,588.5 465.50,588.5 466.50,588.5 467.50,588.5 468.50,588.5 469.50,588.5 470.50,588.5 471.50,588.5 472.50,588.5 473.50,588.5 474.50,588.5 475.50,588.5 476.50,588.5 477.50,588.5 478.50,588.5 479.50,588.5 480.50,587.5 481.50,588.5 482.50,588.5 483.50,588.5 484.50,588.5 485.50,588.5 486.50,588.5 487.50,588.5 488.50,588.5 489.50,587.5 490.50,588.5 491.50,587.5 492.50,588.5 493.50,588.5 494.50,588.5 495.50,588.5 496.50,588.5 497.50,588.5 498.50,588.5 499.50,588.5 500.50,588.5 501.50,588.5 502.50,588.5 503.50,588.5 504.50,588.5 505.50,588.5 506.50,588.5 507.50,588.5 508.50,588.5 509.50,588.5 510.50,588.5 511.50,588.5 512.50,587.5 513.50,588.5 514.50,588.5 515.50,588.5 516.50,588.5 517.50,588.5 518.50,588.5 519.50,588.5 520.50,588.5 521.50,588.5 522.50,588.5 523.50,588.5 524.50,588.5 525.50,588.5 526.50,588.5 527.50,588.5 528.50,588.5 529.50,588.5 530.50,588.5 531.50,588.5 532.50,588.5 533.50,588.5 534.50,588.5 535.50,588.5 536.50,587.5 537.50,588.5 538.50,588.5 539.50,588.5 540.50,588.5 541.50,588.5 542.50,587.5 543.50,588.5 544.50,588.5 545.50,588.5 546.50,587.5 547.50,587.5 548.50,588.5 549.50,588.5 550.50,588.5 551.50,588.5 552.50,588.5 553.50,588.5 554.50,588.5 555.50,588.5 556.50,588.5 557.50,588.5 558.50,588.5 559.50,588.5 560.50,588.5 561.50,588.5 562.50,587.5 563.50,588.5 564.50,588.5 565.50,588.5 566.50,588.5 567.50,588.5 568.50,588.5 569.50,588.5 570.50,588.5 571.50,588.5 572.50,588.5 573.50,588.5 574.50,588.5 575.50,588.5 576.50,588.5 577.50,588.5 578.50,588.5 579.50,587.5 580.50,588.5 581.50,588.5 582.50,588.5 583.50,588.5 584.50,588.5 585.50,588.5 586.50,588.5 587.50,588.5 588.50,588.5 589.50,587.5 590.50,588.5 591.50,588.5 592.50,588.5 593.50,588.5 594.50,588.5 595.50,588.5 596.50,588.5 597.50,588.5 598.50,588.5 599.50,588.5 600.50,588.5 601.50,588.5 602.50,588.5 603.50,588.5 604.50,588.5 605.50,588.5 606.50,588.5 607.50,588.5 608.50,588.5 609.50,588.5 610.50,588.5 611.50,588.5 612.50,588.5 613.50,588.5 614.50,588.5 615.50,588.5 616.50,588.5 617.50,587.5 618.50,588.5 619.50,588.5 620.50,588.5 621.50,588.5 622.50,588.5 623.50,588.5 624.50,588.5 625.50,588.5 626.50,588.5 627.50,588.5 628.50,588.5 629.50,588.5 630.50,588.5 631.50,588.5 632.50,587.5 633.50,588.5 634.50,588.5 635.50,588.5 636.50,588.5 637.50,588.5 638.50,588.5 639.50,588.5 640.50,588.5 641.50,588.5 642.50,588.5 643.50,588.5 644.50,588.5 645.50,588.5 646.50,588.5 647.50,588.5 648.50,588.5 649.50,588.5 650.50,588.5 651.50,588.5 652.50,588.5 653.50,587.5 654.50,587.5 655.50,588.5 656.50,588.5 657.50,588.5 658.50,588.5 659.50,588.5 660.50,588.5 661.50,588.5 662.50,587.5 663.50,588.5 664.50,588.5 665.50,588.5 666.50,588.5 667.50,588.5 668.50,588.5 669.50,588.5 670.50,588.5 671.50,588.5 672.50,588.5 673.50,588.5 674.50,588.5 675.50,588.5 676.50,588.5 677.50,587.5 678.50,588.5 679.50,588.5 680.50,588.5 681.50,588.5 682.50,588.5 683.50,588.5 684.50,588.5 685.50,588.5 686.50,588.5 687.50,588.5 688.50,588.5 689.50,588.5 690.50,588.5 691.50,588.5 692.50,588.5 693.50,588.5 694.50,588.5 695.50,587.5 696.50,588.5 697.50,588.5 698.50,588.5 699.50,588.5 700.50,588.5 701.50,587.5 702.50,588.5 703.50,588.5 704.50,588.5 705.50,588.5 706.50,588.5 707.50,588.5 708.50,588.5 709.50,588.5 710.50,588.5 711.50,588.5 712.50,588.5 713.50,588.5 714.50,588.5 715.50,588.5 716.50,588.5 717.50,588.5 718.50,588.5 719.50,588.5 720.50,588.5 721.50,588.5 722.50,588.5 723.50,588.5 724.50,588.5 725.50,588.5 726.50,588.5 727.50,588.5 728.50,588.5 729.50,588.5 730.50,588.5 731.50,588.5 732.50,588.5 733.50,588.5 734.50,588.5 735.50,588.5 736.50,588.5 737.50,588.5 738.50,588.5 739.50,588.5 740.50,588.5 741.50,588.4 742.50,588.4 743.50,588.3 744.50,588.2 745.50,588.0 746.50,588.2 747.50,587.9 748.50,587.9 749.50,588.1 750.50,587.5 751.50,587.5 752.50,587.8 753.50,587.8 754.50,587.4 755.50,587.3 756.50,587.1 757.50,587.3 758.50,587.0 759.50,586.7 760.50,587.3 761.50,587.4 762.50,586.7 763.50,587.5 764.50,586.7 765.50,587.2 766.50,587.4 767.50,586.7 768.50,586.4 769.50,586.6 770.50,586.9 771.50,586.0 772.50,587.2 773.50,585.9 774.50,586.6 775.50,585.3 776.50,587.0 777.50,586.1 778.50,586.5 779.50,585.3 780.50,586.4 781.50,586.0 782.50,586.2 783.50,584.7 784.50,584.1 785.50,585.9 786.50,585.1 787.50,583.6 788.50,584.9 789.50,583.0 790.50,585.4 791.50,584.1 792.50,582.4 793.50,581.6 794.50,583.2 795.50,580.8 796.50,582.9 797.50,581.1 798.50,580.3 799.50,580.3 800.50,577.9 801.50,576.2 802.50,577.8 803.50,581.7 804.50,579.0 805.50,579.7 806.50,580.5 807.50,584.0 808.50,583.4 809.50,583.4 810.50,582.5 811.50,583.8 812.50,582.3 813.50,581.6 814.50,583.6 815.50,584.0 816.50,583.6 817.50,582.5 818.50,582.6 819.50,584.5 820.50,585.4 821.50,584.8 822.50,583.6 823.50,582.3 824.50,585.5 825.50,583.0 826.50,584.2 827.50,582.9 828.50,585.4 829.50,583.6 830.50,585.1 831.50,585.3 832.50,584.6 833.50,583.9 834.50,583.3 835.50,584.0 836.50,582.3 837.50,585.4 838.50,583.6 839.50,582.5 840.50,582.8 841.50,583.5 842.50,584.4 843.50,584.9 844.50,585.1 845.50,583.2 846.50,585.1 847.50,585.6"/><g fill="#fff" shape-rendering="crispEdges"><rect x="800" y="338" width="1" height="250"/><rect x="801" y="439" width="1" height="149"/><rect x="799" y="528" width="1" height="60"/><rect x="798" y="578" width="1" height="10"/><rect x="802" y="570" width="1" height="18"/><rect x="803" y="580" width="1" height="8"/></g><rect x="114" y="588" width="734" height="1" fill="#fff" shape-rendering="crispEdges"/><g font-family="Liberation Sans, sans-serif" fill="#000"><text x="104.3" y="592.6" text-anchor="end" font-size="11" letter-spacing="-0.268">0</text><text x="104.3" y="559.6" text-anchor="end" font-size="11" letter-spacing="-0.268">100</text><text x="104.3" y="526.6" text-anchor="end" font-size="11" letter-spacing="-0.268">200</text><text x="104.3" y="494.6" text-anchor="end" font-size="11" letter-spacing="-0.268">300</text><text x="104.3" y="461.6" text-anchor="end" font-size="11" letter-spacing="-0.268">400</text><text x="104.3" y="428.6" text-anchor="end" font-size="11" letter-spacing="-0.268">500</text><text x="104.3" y="396.6" text-anchor="end" font-size="11" letter-spacing="-0.268">600</text><text x="104.3" y="363.6" text-anchor="end" font-size="11" letter-spacing="-0.268">700</text><text x="104.3" y="330.6" text-anchor="end" font-size="11" letter-spacing="-0.268">800</text><text x="113.8" y="607" text-anchor="middle" font-size="11" letter-spacing="-0.268">0</text><text x="162.8" y="607" text-anchor="middle" font-size="11" letter-spacing="-0.268">50</text><text x="211.8" y="607" text-anchor="middle" font-size="11" letter-spacing="-0.268">100</text><text x="260.8" y="607" text-anchor="middle" font-size="11" letter-spacing="-0.268">150</text><text x="308.8" y="607" text-anchor="middle" font-size="11" letter-spacing="-0.268">200</text><text x="357.8" y="607" text-anchor="middle" font-size="11" letter-spacing="-0.268">250</text><text x="406.8" y="607" text-anchor="middle" font-size="11" letter-spacing="-0.268">300</text><text x="455.8" y="607" text-anchor="middle" font-size="11" letter-spacing="-0.268">350</text><text x="504.8" y="607" text-anchor="middle" font-size="11" letter-spacing="-0.268">400</text><text x="553.8" y="607" text-anchor="middle" font-size="11" letter-spacing="-0.268">450</text><text x="602.8" y="607" text-anchor="middle" font-size="11" letter-spacing="-0.268">500</text><text x="651.8" y="607" text-anchor="middle" font-size="11" letter-spacing="-0.268">550</text><text x="699.8" y="607" text-anchor="middle" font-size="11" letter-spacing="-0.268">600</text><text x="748.8" y="607" text-anchor="middle" font-size="11" letter-spacing="-0.268">650</text><text x="797.8" y="607" text-anchor="middle" font-size="11" letter-spacing="-0.268">700</text><text x="846.8" y="607" text-anchor="middle" font-size="11" letter-spacing="-0.268">750</text><text x="479" y="621.7" text-anchor="middle" font-size="11" letter-spacing="-0.247">Frequenz</text><text x="80.5" y="457" text-anchor="middle" font-size="11" letter-spacing="-0.269" transform="rotate(-90 80.5 457)">Amplitude</text></g></svg>
<div class="t" style="left:56.70px;top:657.79px;font-size:11px;line-height:20px;color:#000;letter-spacing:-0.144px;">Signalverlaufsgraph</div>
<svg class="a" style="left:792px;top:635px" width="96" height="42" viewBox="792 635 96 42"><defs><linearGradient id="llb" x1="0" x2="1" y1="0" y2="0"><stop offset="0" stop-color="#c9c9c9"/><stop offset=".1" stop-color="#d3d3d3"/><stop offset=".72" stop-color="#d1d1d1"/><stop offset="1" stop-color="#c0c0c0"/></linearGradient><linearGradient id="lrb" x1="0" x2="1" y1="0" y2="0"><stop offset="0" stop-color="#c0c0c0"/><stop offset=".45" stop-color="#a4a4a4"/><stop offset="1" stop-color="#727272"/></linearGradient></defs><rect x="792" y="635" width="96" height="42" fill="#c0c0c0"/><rect x="792" y="635" width="13" height="42" fill="url(#llb)"/><rect x="874" y="635" width="14" height="42" fill="url(#lrb)"/><polygon points="792,635 887,635 881,637 792,637" fill="#dedede"/><rect x="887" y="635" width="1" height="42" fill="#4e4e4e"/><rect x="794" y="676" width="94" height="1" fill="#9c9c9c"/><rect x="844" y="637" width="29" height="17" fill="#e2e2e2"/><rect x="844" y="637" width="28" height="16" fill="#000"/><rect x="844" y="658" width="29" height="17" fill="#e2e2e2"/><rect x="844" y="658" width="28" height="16" fill="#000"/><polyline points="846,648.5 854.5,640.5 862.5,648.5 871,640.5" fill="none" stroke="#fff" stroke-width="1"/><polyline points="846,669.5 854.5,661.5 862.5,669.5 871,661.5" fill="none" stroke="#ff3030" stroke-width="1"/><g font-family="Liberation Sans, sans-serif" fill="#000"><text x="805.9" y="648.5" text-anchor="start" font-size="11" letter-spacing="-0.272">Plot 0</text><text x="805.9" y="669.4" text-anchor="start" font-size="11" letter-spacing="-0.355">Plot 1</text></g></svg>
<svg class="a" style="left:49px;top:677px" width="839" height="323" viewBox="49 677 839 323"><defs><linearGradient id="lg" x1="0" x2="1" y1="0" y2="0"><stop offset="0" stop-color="#c9c9c9"/><stop offset=".1" stop-color="#d3d3d3"/><stop offset=".72" stop-color="#d1d1d1"/><stop offset="1" stop-color="#c0c0c0"/></linearGradient><linearGradient id="rg" x1="0" x2="1" y1="0" y2="0"><stop offset="0" stop-color="#c0c0c0"/><stop offset=".45" stop-color="#a4a4a4"/><stop offset="1" stop-color="#727272"/></linearGradient></defs><rect x="49" y="677" width="839" height="323" fill="#c0c0c0"/><rect x="49" y="677" width="13" height="323" fill="url(#lg)"/><rect x="874" y="677" width="14" height="323" fill="url(#rg)"/><polygon points="49,677 887,677 881,679 49,679" fill="#dadada"/><polygon points="49,1000 52,998 888,998 888,1000" fill="#9a9a9a"/><rect x="887" y="677" width="1" height="323" fill="#4e4e4e"/><rect x="119" y="686" width="746" height="276" fill="#e4e4e4"/><rect x="119" y="686" width="745" height="275" fill="#5a5a5a"/><rect x="120" y="687" width="744" height="274" fill="#000"/><g shape-rendering="crispEdges"><rect x="176" y="687" width="1" height="274" fill="#003300"/><rect x="209" y="687" width="1" height="274" fill="#003300"/><rect x="232" y="687" width="1" height="274" fill="#003300"/><rect x="250" y="687" width="1" height="274" fill="#003300"/><rect x="265" y="687" width="1" height="274" fill="#003300"/><rect x="277" y="687" width="1" height="274" fill="#003300"/><rect x="288" y="687" width="1" height="274" fill="#003300"/><rect x="297" y="687" width="1" height="274" fill="#003300"/><rect x="362" y="687" width="1" height="274" fill="#003300"/><rect x="394" y="687" width="1" height="274" fill="#003300"/><rect x="418" y="687" width="1" height="274" fill="#003300"/><rect x="436" y="687" width="1" height="274" fill="#003300"/><rect x="450" y="687" width="1" height="274" fill="#003300"/><rect x="463" y="687" width="1" height="274" fill="#003300"/><rect x="474" y="687" width="1" height="274" fill="#003300"/><rect x="483" y="687" width="1" height="274" fill="#003300"/><rect x="548" y="687" width="1" height="274" fill="#003300"/><rect x="580" y="687" width="1" height="274" fill="#003300"/><rect x="603" y="687" width="1" height="274" fill="#003300"/><rect x="621" y="687" width="1" height="274" fill="#003300"/><rect x="636" y="687" width="1" height="274" fill="#003300"/><rect x="649" y="687" width="1" height="274" fill="#003300"/><rect x="659" y="687" width="1" height="274" fill="#003300"/><rect x="669" y="687" width="1" height="274" fill="#003300"/><rect x="733" y="687" width="1" height="274" fill="#003300"/><rect x="766" y="687" width="1" height="274" fill="#003300"/><rect x="789" y="687" width="1" height="274" fill="#003300"/><rect x="807" y="687" width="1" height="274" fill="#003300"/><rect x="822" y="687" width="1" height="274" fill="#003300"/><rect x="834" y="687" width="1" height="274" fill="#003300"/><rect x="845" y="687" width="1" height="274" fill="#003300"/><rect x="855" y="687" width="1" height="274" fill="#003300"/><rect x="120" y="693" width="744" height="1" fill="#003300"/><rect x="120" y="699" width="744" height="1" fill="#003300"/><rect x="120" y="705" width="744" height="1" fill="#003300"/><rect x="120" y="711" width="744" height="1" fill="#003300"/><rect x="120" y="723" width="744" height="1" fill="#003300"/><rect x="120" y="729" width="744" height="1" fill="#003300"/><rect x="120" y="736" width="744" height="1" fill="#003300"/><rect x="120" y="742" width="744" height="1" fill="#003300"/><rect x="120" y="754" width="744" height="1" fill="#003300"/><rect x="120" y="760" width="744" height="1" fill="#003300"/><rect x="120" y="766" width="744" height="1" fill="#003300"/><rect x="120" y="772" width="744" height="1" fill="#003300"/><rect x="120" y="784" width="744" height="1" fill="#003300"/><rect x="120" y="790" width="744" height="1" fill="#003300"/><rect x="120" y="796" width="744" height="1" fill="#003300"/><rect x="120" y="802" width="744" height="1" fill="#003300"/><rect x="120" y="814" width="744" height="1" fill="#003300"/><rect x="120" y="820" width="744" height="1" fill="#003300"/><rect x="120" y="827" width="744" height="1" fill="#003300"/><rect x="120" y="833" width="744" height="1" fill="#003300"/><rect x="120" y="845" width="744" height="1" fill="#003300"/><rect x="120" y="851" width="744" height="1" fill="#003300"/><rect x="120" y="857" width="744" height="1" fill="#003300"/><rect x="120" y="863" width="744" height="1" fill="#003300"/><rect x="120" y="875" width="744" height="1" fill="#003300"/><rect x="120" y="881" width="744" height="1" fill="#003300"/><rect x="120" y="887" width="744" height="1" fill="#003300"/><rect x="120" y="893" width="744" height="1" fill="#003300"/><rect x="120" y="905" width="744" height="1" fill="#003300"/><rect x="120" y="911" width="744" height="1" fill="#003300"/><rect x="120" y="918" width="744" height="1" fill="#003300"/><rect x="120" y="924" width="744" height="1" fill="#003300"/><rect x="120" y="936" width="744" height="1" fill="#003300"/><rect x="120" y="942" width="744" height="1" fill="#003300"/><rect x="120" y="948" width="744" height="1" fill="#003300"/><rect x="120" y="954" width="744" height="1" fill="#003300"/><rect x="306" y="687" width="1" height="274" fill="#006400"/><rect x="492" y="687" width="1" height="274" fill="#006400"/><rect x="677" y="687" width="1" height="274" fill="#006400"/><rect x="120" y="717" width="744" height="1" fill="#006400"/><rect x="120" y="748" width="744" height="1" fill="#006400"/><rect x="120" y="778" width="744" height="1" fill="#006400"/><rect x="120" y="808" width="744" height="1" fill="#006400"/><rect x="120" y="839" width="744" height="1" fill="#006400"/><rect x="120" y="869" width="744" height="1" fill="#006400"/><rect x="120" y="899" width="744" height="1" fill="#006400"/><rect x="120" y="930" width="744" height="1" fill="#006400"/><rect x="113" y="687" width="5" height="1" fill="#000"/><rect x="113" y="717" width="5" height="1" fill="#000"/><rect x="113" y="748" width="5" height="1" fill="#000"/><rect x="113" y="778" width="5" height="1" fill="#000"/><rect x="113" y="808" width="5" height="1" fill="#000"/><rect x="113" y="839" width="5" height="1" fill="#000"/><rect x="113" y="869" width="5" height="1" fill="#000"/><rect x="113" y="899" width="5" height="1" fill="#000"/><rect x="113" y="930" width="5" height="1" fill="#000"/><rect x="113" y="960" width="5" height="1" fill="#000"/><rect x="120" y="963" width="1" height="5" fill="#000"/><rect x="306" y="963" width="1" height="5" fill="#000"/><rect x="492" y="963" width="1" height="5" fill="#000"/><rect x="677" y="963" width="1" height="5" fill="#000"/><rect x="863" y="963" width="1" height="5" fill="#000"/></g><rect x="120" y="738" width="725" height="1" fill="#fff" shape-rendering="crispEdges"/><polyline shape-rendering="crispEdges" fill="none" stroke="#fc4646" stroke-width="1" points="120,931.5 492,931.5 500,932.5 520,933.5 547,935.2 580.7,787.8 603.3,842 621.5,812 636.4,793.4 648.3,788.2 658.7,757.4 669.8,737 677.2,731.4 684.7,731 697.7,724.7 705.1,723.2 710.7,713.6 716.2,720.3 720,721 731,718.4 742.2,719.9 757.1,717.7 762.6,722.1 768.2,719.5 775.6,721 781.2,716.5 786.8,724 794.2,723.2 797.6,714.4 799.5,731 803,736 817,772 821,785 824,797 826,790 827,778 828.5,795 830,773 831.5,802 833,770 834,812 835,740 836,822 837,752 838.5,800 840,825 845,852"/><g font-family="Liberation Sans, sans-serif" fill="#000"><text x="110.5" y="691.6" text-anchor="end" font-size="11" letter-spacing="-0.268">0</text><text x="110.5" y="721.6" text-anchor="end" font-size="11" letter-spacing="-0.041">-5</text><text x="110.5" y="752.6" text-anchor="end" font-size="11" letter-spacing="-0.116">-10</text><text x="110.5" y="782.6" text-anchor="end" font-size="11" letter-spacing="-0.116">-15</text><text x="110.5" y="812.6" text-anchor="end" font-size="11" letter-spacing="-0.116">-20</text><text x="110.5" y="843.6" text-anchor="end" font-size="11" letter-spacing="-0.116">-25</text><text x="110.5" y="873.6" text-anchor="end" font-size="11" letter-spacing="-0.116">-30</text><text x="110.5" y="903.6" text-anchor="end" font-size="11" letter-spacing="-0.116">-35</text><text x="110.5" y="934.6" text-anchor="end" font-size="11" letter-spacing="-0.116">-40</text><text x="110.5" y="964.6" text-anchor="end" font-size="11" letter-spacing="-0.116">-45</text><text x="119.5" y="979" text-anchor="middle" font-size="11" letter-spacing="-0.268">0</text><text x="305.5" y="979" text-anchor="middle" font-size="11" letter-spacing="-0.268">0</text><text x="491.5" y="979" text-anchor="middle" font-size="11" letter-spacing="-0.268">1</text><text x="676.5" y="979" text-anchor="middle" font-size="11" letter-spacing="-0.268">10</text><text x="862.5" y="979" text-anchor="middle" font-size="11" letter-spacing="-0.268">100</text><text x="490.3" y="994.3" text-anchor="middle" font-size="11" letter-spacing="-0.210">Zeit</text><text x="89.3" y="824" text-anchor="middle" font-size="11" letter-spacing="-0.269" transform="rotate(-90 89.3 824)">Amplitude</text></g></svg>
<div class="a sbh"></div><div class="a sbv"></div>
<div class="a" style="left:1259px;top:1005px;width:16px;height:19px;background:#ece9f0"></div>
<div class="sbtn" style="left:0px;top:1006px;width:17px;height:17px"></div>
<div class="sbtn" style="left:1242px;top:1006px;width:17px;height:17px"></div>
<div class="sbtn" style="left:1260px;top:74px;width:15px;height:17px;border-top:none;border-right:none;border-radius:0 0 0 2px"></div>
<div class="sbtn" style="left:1260px;top:988px;width:16px;height:17px"></div>
<div class="a" style="left:243px;top:1006px;width:982px;height:17px;box-sizing:border-box;border:1px solid #8e90b0;border-radius:2px;background:linear-gradient(to bottom,#ffffff 0,#f1f1f8 35%,#d6d7e6 70%,#b9bbd2 100%);box-shadow:inset 1px 1px 0 #fff"></div>
<div class="a" style="left:1260px;top:216px;width:16px;height:604px;box-sizing:border-box;border:1px solid #8e90b0;border-radius:2px;background:linear-gradient(to right,#ffffff 0,#f1f1f8 35%,#d6d7e6 70%,#b9bbd2 100%);box-shadow:inset 1px 1px 0 #fff"></div>
<svg class="a" style="left:0;top:0" width="1275" height="1050" viewBox="0 0 1275 1050">
<g fill="none" stroke="#2e2e3a" stroke-width="2.2">
<path d="M10.5 1010.5 L6.5 1014.5 L10.5 1018.5"/>
<path d="M1248.5 1010.5 L1252.5 1014.5 L1248.5 1018.5"/>
<path d="M1263.5 84 L1267.5 80 L1271.5 84"/>
<path d="M1263.5 994.5 L1267.5 998.5 L1271.5 994.5"/>
</g>
<g stroke="#a0a1bb" stroke-width="1" shape-rendering="crispEdges"><path d="M731 1011 V1018 M733 1011 V1018 M735 1011 V1018 M737 1011 V1018"/><path d="M1264 514.5 H1271 M1264 516.5 H1271 M1264 518.5 H1271 M1264 520.5 H1271"/></g>
</svg>
<div class="a" style="left:0;top:1024px;width:1275px;height:26px;background:#000"></div>
<svg class="a" style="left:0;top:0;mix-blend-mode:difference" width="1275" height="1050" viewBox="0 0 1275 1050">
<defs><clipPath id="wc"><path clip-rule="evenodd" d="M0 0H1275V1050H0Z M792 635H888V677H792Z"/></clipPath><path id="wt" d="M895.66 879.10 A143.0 143.0 0 1 1 1143.34 879.10"/><path id="wb" d="M877.47 725.60 A164.0 164.0 0 1 0 1161.53 725.60"/></defs>
<path d="M1019.5 619.6 L1020.7 619.5 L1022.0 619.3 L1023.2 619.2 L1024.5 619.0 L1025.7 618.4 L1027.0 617.7 L1028.3 616.9 L1029.6 615.4 L1031.0 613.5 L1032.4 611.6 L1033.9 609.2 L1035.4 606.5 L1037.0 603.9 L1038.5 601.8 L1040.1 600.2 L1041.5 599.6 L1042.9 599.2 L1044.4 599.0 L1045.8 599.0 L1047.1 599.1 L1048.5 599.4 L1049.9 599.7 L1051.2 600.3 L1052.5 601.0 L1053.7 602.0 L1054.7 603.9 L1055.7 606.3 L1056.5 609.2 L1057.3 612.3 L1058.1 615.0 L1059.0 617.2 L1059.8 619.3 L1060.7 621.1 L1061.7 622.2 L1062.8 623.2 L1063.9 624.1 L1065.0 624.7 L1066.2 625.1 L1067.3 625.6 L1068.5 626.0 L1069.7 626.2 L1071.0 626.4 L1072.2 626.6 L1073.5 626.7 L1074.8 626.4 L1076.3 626.1 L1077.7 625.6 L1079.4 624.5 L1081.2 623.1 L1083.1 621.6 L1085.1 619.7 L1087.3 617.4 L1089.5 615.3 L1091.5 613.7 L1093.4 612.5 L1095.0 612.3 L1096.5 612.3 L1097.9 612.5 L1099.2 612.9 L1100.5 613.3 L1101.8 613.9 L1103.0 614.6 L1104.1 615.5 L1105.2 616.5 L1106.1 617.8 L1106.6 619.9 L1106.9 622.5 L1107.0 625.5 L1106.9 628.7 L1107.0 631.5 L1107.2 633.8 L1107.5 636.1 L1107.9 638.0 L1108.6 639.4 L1109.4 640.6 L1110.2 641.8 L1111.1 642.6 L1112.1 643.3 L1113.1 644.1 L1114.2 644.8 L1115.3 645.3 L1116.4 645.8 L1117.6 646.3 L1118.8 646.7 L1120.2 646.8 L1121.6 646.8 L1123.2 646.8 L1125.1 646.2 L1127.2 645.2 L1129.4 644.3 L1131.9 643.0 L1134.6 641.3 L1137.2 639.9 L1139.6 638.8 L1141.8 638.2 L1143.3 638.4 L1144.7 638.8 L1146.1 639.3 L1147.3 640.0 L1148.4 640.7 L1149.5 641.7 L1150.5 642.6 L1151.3 643.8 L1152.1 645.0 L1152.7 646.5 L1152.6 648.7 L1152.2 651.3 L1151.5 654.2 L1150.6 657.2 L1149.9 659.9 L1149.6 662.3 L1149.2 664.5 L1149.1 666.5 L1149.4 668.0 L1149.8 669.4 L1150.3 670.7 L1151.0 671.8 L1151.8 672.7 L1152.6 673.7 L1153.4 674.7 L1154.3 675.5 L1155.3 676.2 L1156.3 677.0 L1157.3 677.7 L1158.7 678.2 L1160.1 678.6 L1161.5 678.9 L1163.6 678.8 L1165.9 678.4 L1168.2 678.1 L1170.9 677.5 L1174.0 676.6 L1176.9 675.8 L1179.5 675.4 L1181.7 675.4 L1183.2 676.0 L1184.5 676.7 L1185.6 677.5 L1186.6 678.5 L1187.5 679.6 L1188.3 680.7 L1189.0 681.9 L1189.5 683.2 L1189.9 684.7 L1190.1 686.2 L1189.5 688.3 L1188.4 690.7 L1186.9 693.3 L1185.3 696.0 L1183.9 698.5 L1183.0 700.6 L1182.1 702.8 L1181.4 704.7 L1181.4 706.2 L1181.4 707.6 L1181.5 709.0 L1181.9 710.2 L1182.4 711.3 L1182.9 712.5 L1183.5 713.6 L1184.2 714.6 L1184.9 715.6 L1185.7 716.6 L1186.5 717.6 L1187.7 718.3 L1188.9 719.1 L1190.2 719.8 L1192.2 720.2 L1194.5 720.5 L1196.9 720.7 L1199.7 720.8 L1202.9 720.7 L1205.9 720.8 L1208.5 721.1 L1210.7 721.6 L1211.9 722.5 L1213.0 723.6 L1213.9 724.7 L1214.6 725.9 L1215.2 727.1 L1215.6 728.4 L1216.0 729.8 L1216.2 731.2 L1216.2 732.6 L1215.9 734.2 L1214.8 736.1 L1213.1 738.1 L1211.0 740.2 L1208.7 742.4 L1206.8 744.5 L1205.3 746.3 L1203.9 748.1 L1202.7 749.8 L1202.3 751.2 L1202.0 752.6 L1201.7 754.0 L1201.8 755.3 L1202.0 756.5 L1202.1 757.7 L1202.4 758.9 L1202.8 760.1 L1203.3 761.3 L1203.7 762.4 L1204.3 763.5 L1205.2 764.6 L1206.2 765.6 L1207.3 766.7 L1209.1 767.6 L1211.3 768.4 L1213.5 769.3 L1216.2 770.1 L1219.3 770.8 L1222.2 771.7 L1224.6 772.6 L1226.6 773.6 L1227.5 774.9 L1228.3 776.2 L1228.9 777.5 L1229.2 778.8 L1229.5 780.1 L1229.6 781.5 L1229.6 782.9 L1229.4 784.3 L1229.0 785.7 L1228.4 787.2 L1226.8 788.7 L1224.6 790.2 L1222.1 791.8 L1219.3 793.3 L1216.9 794.8 L1215.0 796.2 L1213.1 797.5 L1211.6 798.9 L1210.8 800.1 L1210.1 801.4 L1209.5 802.7 L1209.2 803.9 L1209.1 805.1 L1208.9 806.4 L1208.8 807.6 L1208.9 808.8 L1209.1 810.1 L1209.2 811.3 L1209.5 812.5 L1210.1 813.8 L1210.8 815.1 L1211.6 816.3 L1213.1 817.7 L1215.0 819.0 L1216.9 820.4 L1219.3 821.9 L1222.1 823.4 L1224.6 825.0 L1226.8 826.5 L1228.4 828.0 L1229.0 829.5 L1229.4 830.9 L1229.6 832.3 L1229.6 833.7 L1229.5 835.1 L1229.2 836.4 L1228.9 837.7 L1228.3 839.0 L1227.5 840.3 L1226.6 841.6 L1224.6 842.6 L1222.2 843.5 L1219.3 844.4 L1216.2 845.1 L1213.5 845.9 L1211.3 846.8 L1209.1 847.6 L1207.3 848.5 L1206.2 849.6 L1205.2 850.6 L1204.3 851.7 L1203.7 852.8 L1203.3 853.9 L1202.8 855.1 L1202.4 856.3 L1202.1 857.5 L1202.0 858.7 L1201.8 859.9 L1201.7 861.2 L1202.0 862.6 L1202.3 864.0 L1202.7 865.4 L1203.9 867.1 L1205.3 868.9 L1206.8 870.7 L1208.7 872.8 L1211.0 875.0 L1213.1 877.1 L1214.8 879.1 L1215.9 881.0 L1216.2 882.6 L1216.2 884.0 L1216.0 885.4 L1215.6 886.8 L1215.2 888.1 L1214.6 889.3 L1213.9 890.5 L1213.0 891.6 L1211.9 892.7 L1210.7 893.6 L1208.5 894.1 L1205.9 894.4 L1202.9 894.5 L1199.7 894.4 L1196.9 894.5 L1194.5 894.7 L1192.2 895.0 L1190.2 895.4 L1188.9 896.1 L1187.7 896.9 L1186.5 897.6 L1185.7 898.6 L1184.9 899.6 L1184.2 900.6 L1183.5 901.6 L1182.9 902.7 L1182.4 903.9 L1181.9 905.0 L1181.5 906.2 L1181.4 907.6 L1181.4 909.0 L1181.4 910.5 L1182.1 912.4 L1183.0 914.6 L1183.9 916.7 L1185.3 919.2 L1186.9 921.9 L1188.4 924.5 L1189.5 926.9 L1190.1 929.0 L1189.9 930.5 L1189.5 932.0 L1189.0 933.3 L1188.3 934.5 L1187.5 935.6 L1186.6 936.7 L1185.6 937.7 L1184.5 938.5 L1183.2 939.2 L1181.7 939.8 L1179.5 939.8 L1176.9 939.4 L1174.0 938.6 L1170.9 937.7 L1168.2 937.1 L1165.9 936.8 L1163.6 936.4 L1161.5 936.3 L1160.1 936.6 L1158.7 937.0 L1157.3 937.5 L1156.3 938.2 L1155.3 939.0 L1154.3 939.7 L1153.4 940.5 L1152.6 941.5 L1151.8 942.5 L1151.0 943.4 L1150.3 944.5 L1149.8 945.8 L1149.4 947.2 L1149.1 948.7 L1149.2 950.7 L1149.6 952.9 L1149.9 955.3 L1150.6 958.0 L1151.5 961.0 L1152.2 963.9 L1152.6 966.5 L1152.7 968.7 L1152.1 970.2 L1151.3 971.4 L1150.5 972.6 L1149.5 973.5 L1148.4 974.5 L1147.3 975.2 L1146.1 975.9 L1144.7 976.4 L1143.3 976.8 L1141.8 977.0 L1139.6 976.4 L1137.2 975.3 L1134.6 973.9 L1131.9 972.2 L1129.4 970.9 L1127.2 970.0 L1125.1 969.0 L1123.2 968.4 L1121.6 968.4 L1120.2 968.4 L1118.8 968.5 L1117.6 968.9 L1116.4 969.4 L1115.3 969.9 L1114.2 970.4 L1113.1 971.1 L1112.1 971.9 L1111.1 972.6 L1110.2 973.4 L1109.4 974.6 L1108.6 975.8 L1107.9 977.2 L1107.5 979.1 L1107.2 981.4 L1107.0 983.7 L1106.9 986.5 L1107.0 989.7 L1106.9 992.7 L1106.6 995.3 L1106.1 997.4 L1105.2 998.7 L1104.1 999.7 L1103.0 1000.6 L1101.8 1001.3 L1100.5 1001.9 L1099.2 1002.3 L1097.9 1002.7 L1096.5 1002.9 L1095.0 1002.9 L1093.4 1002.7 L1091.5 1001.5 L1089.5 999.9 L1087.3 997.8 L1085.1 995.5 L1083.1 993.6 L1081.2 992.1 L1079.4 990.7 L1077.7 989.6 L1076.3 989.1 L1074.8 988.8 L1073.5 988.5 L1072.2 988.6 L1071.0 988.8 L1069.7 989.0 L1068.5 989.2 L1067.3 989.6 L1066.2 990.1 L1065.0 990.5 L1063.9 991.1 L1062.8 992.0 L1061.7 993.0 L1060.7 994.1 L1059.8 995.9 L1059.0 998.0 L1058.1 1000.2 L1057.3 1002.9 L1056.5 1006.0 L1055.7 1008.9 L1054.7 1011.3 L1053.7 1013.2 L1052.5 1014.2 L1051.2 1014.9 L1049.9 1015.5 L1048.5 1015.8 L1047.1 1016.1 L1045.8 1016.2 L1044.4 1016.2 L1042.9 1016.0 L1041.5 1015.6 L1040.1 1015.0 L1038.5 1013.4 L1037.0 1011.3 L1035.4 1008.7 L1033.9 1006.0 L1032.4 1003.6 L1031.0 1001.7 L1029.6 999.8 L1028.3 998.3 L1027.0 997.5 L1025.7 996.8 L1024.5 996.2 L1023.2 996.0 L1022.0 995.9 L1020.7 995.7 L1019.5 995.6 L1018.3 995.7 L1017.0 995.9 L1015.8 996.0 L1014.5 996.2 L1013.3 996.8 L1012.0 997.5 L1010.7 998.3 L1009.4 999.8 L1008.0 1001.7 L1006.6 1003.6 L1005.1 1006.0 L1003.6 1008.7 L1002.0 1011.3 L1000.5 1013.4 L998.9 1015.0 L997.5 1015.6 L996.1 1016.0 L994.6 1016.2 L993.2 1016.2 L991.9 1016.1 L990.5 1015.8 L989.1 1015.5 L987.8 1014.9 L986.5 1014.2 L985.3 1013.2 L984.3 1011.3 L983.3 1008.9 L982.5 1006.0 L981.7 1002.9 L980.9 1000.2 L980.0 998.0 L979.2 995.9 L978.3 994.1 L977.3 993.0 L976.2 992.0 L975.1 991.1 L974.0 990.5 L972.8 990.1 L971.7 989.6 L970.5 989.2 L969.3 989.0 L968.0 988.8 L966.8 988.6 L965.5 988.5 L964.2 988.8 L962.7 989.1 L961.3 989.6 L959.6 990.7 L957.8 992.1 L955.9 993.6 L953.9 995.5 L951.7 997.8 L949.5 999.9 L947.5 1001.5 L945.6 1002.7 L944.0 1002.9 L942.5 1002.9 L941.1 1002.7 L939.8 1002.3 L938.5 1001.9 L937.2 1001.3 L936.0 1000.6 L934.9 999.7 L933.8 998.7 L932.9 997.4 L932.4 995.3 L932.1 992.7 L932.0 989.7 L932.1 986.5 L932.0 983.7 L931.8 981.4 L931.5 979.1 L931.1 977.2 L930.4 975.8 L929.6 974.6 L928.8 973.4 L927.9 972.6 L926.9 971.9 L925.9 971.1 L924.8 970.4 L923.7 969.9 L922.6 969.4 L921.4 968.9 L920.2 968.5 L918.8 968.4 L917.4 968.4 L915.8 968.4 L913.9 969.0 L911.8 970.0 L909.6 970.9 L907.1 972.2 L904.4 973.9 L901.8 975.3 L899.4 976.4 L897.2 977.0 L895.7 976.8 L894.3 976.4 L892.9 975.9 L891.7 975.2 L890.6 974.5 L889.5 973.5 L888.5 972.6 L887.7 971.4 L886.9 970.2 L886.3 968.7 L886.4 966.5 L886.8 963.9 L887.5 961.0 L888.4 958.0 L889.1 955.3 L889.4 952.9 L889.8 950.7 L889.9 948.7 L889.6 947.2 L889.2 945.8 L888.7 944.5 L888.0 943.4 L887.2 942.5 L886.4 941.5 L885.6 940.5 L884.7 939.7 L883.7 939.0 L882.7 938.2 L881.7 937.5 L880.3 937.0 L878.9 936.6 L877.5 936.3 L875.4 936.4 L873.1 936.8 L870.8 937.1 L868.1 937.7 L865.0 938.6 L862.1 939.4 L859.5 939.8 L857.3 939.8 L855.8 939.2 L854.5 938.5 L853.4 937.7 L852.4 936.7 L851.5 935.6 L850.7 934.5 L850.0 933.3 L849.5 932.0 L849.1 930.5 L848.9 929.0 L849.5 926.9 L850.6 924.5 L852.1 921.9 L853.7 919.2 L855.1 916.7 L856.0 914.6 L856.9 912.4 L857.6 910.5 L857.6 909.0 L857.6 907.6 L857.5 906.2 L857.1 905.0 L856.6 903.9 L856.1 902.7 L855.5 901.6 L854.8 900.6 L854.1 899.6 L853.3 898.6 L852.5 897.6 L851.3 896.9 L850.1 896.1 L848.8 895.4 L846.8 895.0 L844.5 894.7 L842.1 894.5 L839.3 894.4 L836.1 894.5 L833.1 894.4 L830.5 894.1 L828.3 893.6 L827.1 892.7 L826.0 891.6 L825.1 890.5 L824.4 889.3 L823.8 888.1 L823.4 886.8 L823.0 885.4 L822.8 884.0 L822.8 882.6 L823.1 881.0 L824.2 879.1 L825.9 877.1 L828.0 875.0 L830.3 872.8 L832.2 870.7 L833.7 868.9 L835.1 867.1 L836.3 865.4 L836.7 864.0 L837.0 862.6 L837.3 861.2 L837.2 859.9 L837.0 858.7 L836.9 857.5 L836.6 856.3 L836.2 855.1 L835.7 853.9 L835.3 852.8 L834.7 851.7 L833.8 850.6 L832.8 849.6 L831.7 848.5 L829.9 847.6 L827.7 846.8 L825.5 845.9 L822.8 845.1 L819.7 844.4 L816.8 843.5 L814.4 842.6 L812.4 841.6 L811.5 840.3 L810.7 839.0 L810.1 837.7 L809.8 836.4 L809.5 835.1 L809.4 833.7 L809.4 832.3 L809.6 830.9 L810.0 829.5 L810.6 828.0 L812.2 826.5 L814.4 825.0 L816.9 823.4 L819.7 821.9 L822.1 820.4 L824.0 819.0 L825.9 817.7 L827.4 816.3 L828.2 815.1 L828.9 813.8 L829.5 812.5 L829.8 811.3 L829.9 810.1 L830.1 808.8 L830.2 807.6 L830.1 806.4 L829.9 805.1 L829.8 803.9 L829.5 802.7 L828.9 801.4 L828.2 800.1 L827.4 798.9 L825.9 797.5 L824.0 796.2 L822.1 794.8 L819.7 793.3 L816.9 791.8 L814.4 790.2 L812.2 788.7 L810.6 787.2 L810.0 785.7 L809.6 784.3 L809.4 782.9 L809.4 781.5 L809.5 780.1 L809.8 778.8 L810.1 777.5 L810.7 776.2 L811.5 774.9 L812.4 773.6 L814.4 772.6 L816.8 771.7 L819.7 770.8 L822.8 770.1 L825.5 769.3 L827.7 768.4 L829.9 767.6 L831.7 766.7 L832.8 765.6 L833.8 764.6 L834.7 763.5 L835.3 762.4 L835.7 761.3 L836.2 760.1 L836.6 758.9 L836.9 757.7 L837.0 756.5 L837.2 755.3 L837.3 754.0 L837.0 752.6 L836.7 751.2 L836.3 749.8 L835.1 748.1 L833.7 746.3 L832.2 744.5 L830.3 742.4 L828.0 740.2 L825.9 738.1 L824.2 736.1 L823.1 734.2 L822.8 732.6 L822.8 731.2 L823.0 729.8 L823.4 728.4 L823.8 727.1 L824.4 725.9 L825.1 724.7 L826.0 723.6 L827.1 722.5 L828.3 721.6 L830.5 721.1 L833.1 720.8 L836.1 720.7 L839.3 720.8 L842.1 720.7 L844.5 720.5 L846.8 720.2 L848.8 719.8 L850.1 719.1 L851.3 718.3 L852.5 717.6 L853.3 716.6 L854.1 715.6 L854.8 714.6 L855.5 713.6 L856.1 712.5 L856.6 711.3 L857.1 710.2 L857.5 709.0 L857.6 707.6 L857.6 706.2 L857.6 704.7 L856.9 702.8 L856.0 700.6 L855.1 698.5 L853.7 696.0 L852.1 693.3 L850.6 690.7 L849.5 688.3 L848.9 686.2 L849.1 684.7 L849.5 683.2 L850.0 681.9 L850.7 680.7 L851.5 679.6 L852.4 678.5 L853.4 677.5 L854.5 676.7 L855.8 676.0 L857.3 675.4 L859.5 675.4 L862.1 675.8 L865.0 676.6 L868.1 677.5 L870.8 678.1 L873.1 678.4 L875.4 678.8 L877.5 678.9 L878.9 678.6 L880.3 678.2 L881.7 677.7 L882.7 677.0 L883.7 676.2 L884.7 675.5 L885.6 674.7 L886.4 673.7 L887.2 672.7 L888.0 671.8 L888.7 670.7 L889.2 669.4 L889.6 668.0 L889.9 666.5 L889.8 664.5 L889.4 662.3 L889.1 659.9 L888.4 657.2 L887.5 654.2 L886.8 651.3 L886.4 648.7 L886.3 646.5 L886.9 645.0 L887.7 643.8 L888.5 642.6 L889.5 641.7 L890.6 640.7 L891.7 640.0 L892.9 639.3 L894.3 638.8 L895.7 638.4 L897.2 638.2 L899.4 638.8 L901.8 639.9 L904.4 641.3 L907.1 643.0 L909.6 644.3 L911.8 645.2 L913.9 646.2 L915.8 646.8 L917.4 646.8 L918.8 646.8 L920.2 646.7 L921.4 646.3 L922.6 645.8 L923.7 645.3 L924.8 644.8 L925.9 644.1 L926.9 643.3 L927.9 642.6 L928.8 641.8 L929.6 640.6 L930.4 639.4 L931.1 638.0 L931.5 636.1 L931.8 633.8 L932.0 631.5 L932.1 628.7 L932.0 625.5 L932.1 622.5 L932.4 619.9 L932.9 617.8 L933.8 616.5 L934.9 615.5 L936.0 614.6 L937.2 613.9 L938.5 613.3 L939.8 612.9 L941.1 612.5 L942.5 612.3 L944.0 612.3 L945.6 612.5 L947.5 613.7 L949.5 615.3 L951.7 617.4 L953.9 619.7 L955.9 621.6 L957.8 623.1 L959.6 624.5 L961.3 625.6 L962.7 626.1 L964.2 626.4 L965.5 626.7 L966.8 626.6 L968.0 626.4 L969.3 626.2 L970.5 626.0 L971.7 625.6 L972.8 625.1 L974.0 624.7 L975.1 624.1 L976.2 623.2 L977.3 622.2 L978.3 621.1 L979.2 619.3 L980.0 617.2 L980.9 615.0 L981.7 612.3 L982.5 609.2 L983.3 606.3 L984.3 603.9 L985.3 602.0 L986.5 601.0 L987.8 600.3 L989.1 599.7 L990.5 599.4 L991.9 599.1 L993.2 599.0 L994.6 599.0 L996.1 599.2 L997.5 599.6 L998.9 600.2 L1000.5 601.8 L1002.0 603.9 L1003.6 606.5 L1005.1 609.2 L1006.6 611.6 L1008.0 613.5 L1009.4 615.4 L1010.7 616.9 L1012.0 617.7 L1013.3 618.4 L1014.5 619.0 L1015.8 619.2 L1017.0 619.3 L1018.3 619.5Z M846.2 807.6 A173.3 171.8 0 1 0 1192.8 807.6 A173.3 171.8 0 1 0 846.2 807.6Z" fill="#fff" fill-rule="evenodd" clip-path="url(#wc)"/>
<g font-family="Liberation Sans, sans-serif" font-size="31.5" fill="#fff" stroke="#fff" stroke-width="1.0" text-anchor="middle">
<text letter-spacing="0.62" transform="translate(1019.5 0) scale(1.013 1) translate(-1019.5 0)"><textPath href="#wt" startOffset="300.6">UNREGISTERED VERSION</textPath></text>
<text letter-spacing="2.3" transform="translate(1019.5 0) scale(1.013 1) translate(-1019.5 0)"><textPath href="#wb" startOffset="344.5" textLength="500" lengthAdjust="spacingAndGlyphs">Register at www.fcoder.com</textPath></text>
<text x="1020.3" y="754.8" letter-spacing="1.1">REGISTERED</text>
<text x="1018.5" y="798.1" letter-spacing="1.1">VERSION</text>
<text x="1020.5" y="843.3" letter-spacing="1.1">ADDS NO</text>
<text x="1021.8" y="887.5" letter-spacing="1.95">WATERMARK</text>
</g></svg>
</body></html>
